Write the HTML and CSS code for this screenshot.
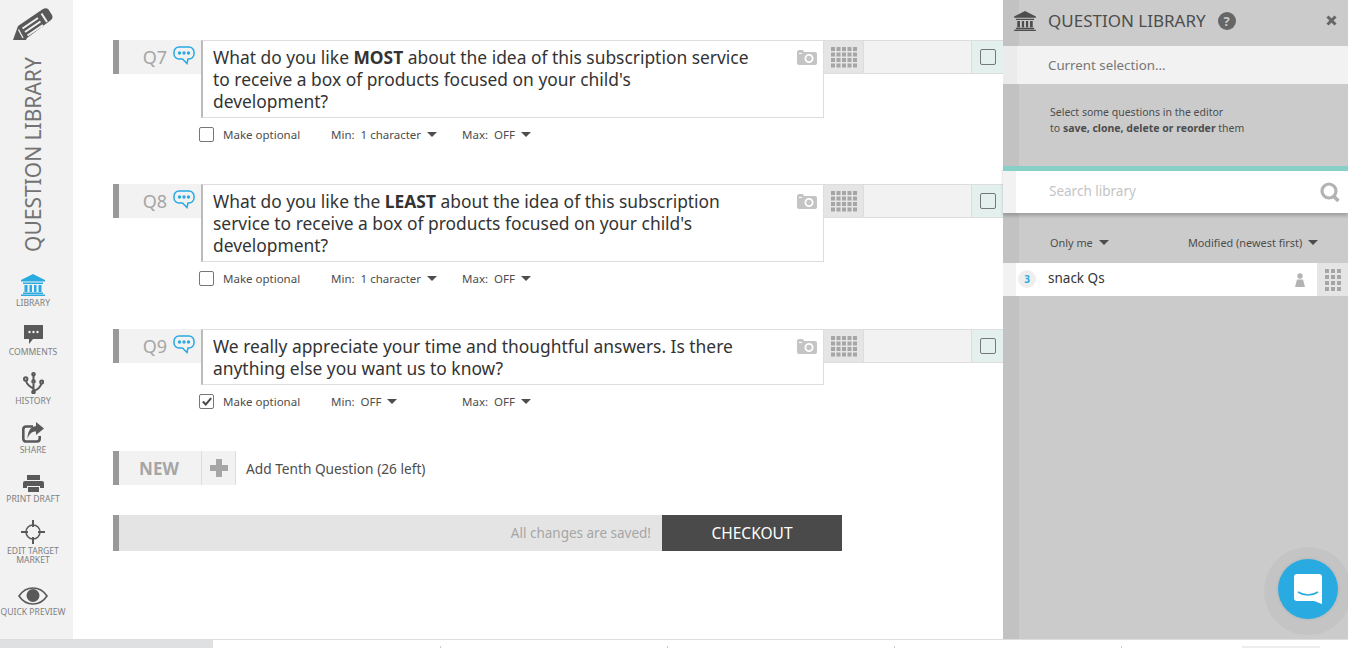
FILE: index.html
```html
<!DOCTYPE html>
<html lang="en">

<head>
    <meta charset="UTF-8" />
    <meta name="viewport" content="width=device-width, initial-scale=1.0" />
    <title>Question editor</title>
    <link rel="stylesheet" href="styles.css">
</head>

<body>
    <svg class="defs" width="0" height="0">
        <symbol id="bank" viewBox="0 0 24 22">
            <path d="M12 0 24 6v1.500H0V6zM2 8.500h20V10H2zM3.500 11h3v7h-3zM8.500 11h2.500v7H8.500zM13 11h2.500v7H13zM17.500 11h3v7h-3zM2 18.500h20V20H2zM0 20.500h24V22H0z" />
        </symbol>
        <symbol id="bubble" viewBox="0 0 22 19">
            <path d="M6 1h10a5 5 0 0 1 5 5v2a5 5 0 0 1-5 5h-1l-1 4.500-4.500-4.500H6a5 5 0 0 1-5-5V6a5 5 0 0 1 5-5z" fill="none" stroke="#29abe2" stroke-width="1.500" />
            <circle cx="6.500" cy="7" r="1.700" fill="#29abe2" />
            <circle cx="11" cy="7" r="1.700" fill="#29abe2" />
            <circle cx="15.500" cy="7" r="1.700" fill="#29abe2" />
        </symbol>
        <symbol id="camera" viewBox="0 0 20 15">
            <path fill-rule="evenodd" d="M2 0h4l1 2h11a2 2 0 0 1 2 2v9a2 2 0 0 1-2 2H2a2 2 0 0 1-2-2V2a2 2 0 0 1 2-2zM12 4a4.500 4.500 0 1 0 0 9 4.500 4.500 0 0 0 0-9zM12 5.800a2.700 2.700 0 1 1 0 5.400 2.700 2.700 0 0 1 0-5.400zM2 3v1h3V3z" />
        </symbol>
        <symbol id="grip" viewBox="0 0 26 21">
            <path d="M0 0h4v4H0zM5.500 0h4v4h-4zM11 0h4v4h-4zM16.500 0h4v4h-4zM22 0h4v4h-4zM0 5.500h4v4H0zM5.500 5.500h4v4h-4zM11 5.500h4v4h-4zM16.500 5.500h4v4h-4zM22 5.500h4v4h-4zM0 11h4v4H0zM5.500 11h4v4h-4zM11 11h4v4h-4zM16.500 11h4v4h-4zM22 11h4v4h-4zM0 16.500h4v4H0zM5.500 16.500h4v4h-4zM11 16.500h4v4h-4zM16.500 16.500h4v4h-4zM22 16.500h4v4h-4z" />
        </symbol>
    </svg>

    <div class="app">
        <aside class="sidebar">
            <svg class="pencil" viewBox="0 0 42 34">
                <path d="M1 33 6 19 31 2c2-1.200 4-1 5.500.5l3.500 5.500c1 2 .5 3.800-1 5L15 31l-1 2z" fill="#595959" />
                <path d="M10.500 21.500 26 11M13 25 28.500 14.500M15.500 28.500 31 18M29.500 6.500l5.500 8.500" fill="none" stroke="#f2f2f2" stroke-width="2" />
                <path d="M6.500 22.500 11 31" stroke="#f2f2f2" stroke-width="1.300" />
            </svg>
            <div class="sideTitle">QUESTION LIBRARY</div>
            <nav class="sideNav">
                <a class="sideLink active">
                    <svg class="sideIcon" width="24" height="22"><use href="#bank" /></svg>
                    <span>LIBRARY</span>
                </a>
                <a class="sideLink">
                    <svg class="sideIcon" viewBox="0 0 19 20" width="19" height="20">
                        <path d="M0 0h19v14H9l-4 5v-5H0z" />
                        <circle cx="5.500" cy="7" r="1.200" fill="#f2f2f2" />
                        <circle cx="9.500" cy="7" r="1.200" fill="#f2f2f2" />
                        <circle cx="13.500" cy="7" r="1.200" fill="#f2f2f2" />
                    </svg>
                    <span>COMMENTS</span>
                </a>
                <a class="sideLink">
                    <svg class="sideIcon" viewBox="0 0 21 22" width="21" height="22">
                        <g fill="none" stroke="#595959" stroke-width="2">
                            <path d="M10.500 3v5M10.500 11.500V19M3 9c1.500 4.500 4 6 7.500 7.500M18.500 11.500c-1 3.500-3.500 6-8 7.500" />
                            <circle cx="10.500" cy="2.300" r="1.300" />
                            <circle cx="10.500" cy="9.500" r="1.300" />
                            <circle cx="2.700" cy="7" r="1.700" />
                            <circle cx="18.700" cy="10" r="1.500" />
                            <circle cx="10.500" cy="20" r="1.300" />
                        </g>
                    </svg>
                    <span>HISTORY</span>
                </a>
                <a class="sideLink">
                    <svg class="sideIcon" viewBox="0 0 22 21" width="22" height="21">
                        <path d="M11 4.500H4a2.700 2.700 0 0 0-2.700 2.700v9.600A2.700 2.700 0 0 0 4 19.500h11a2.700 2.700 0 0 0 2.700-2.700V14" fill="none" stroke="#595959" stroke-width="2.600" />
                        <path d="M14 0 22 6.500 14 13V9.500C9.500 9.500 7 12 5.500 17 5.500 9.500 8.500 4.500 14 4z" />
                    </svg>
                    <span>SHARE</span>
                </a>
                <a class="sideLink">
                    <svg class="sideIcon" viewBox="0 0 21 17" width="21" height="17">
                        <path d="M4 0h13v5H4zM2 6h17a2 2 0 0 1 2 2v5h-4v-2H4v2H0V8a2 2 0 0 1 2-2zM5 12h11v5H5z" />
                    </svg>
                    <span>PRINT DRAFT</span>
                </a>
                <a class="sideLink tall">
                    <svg class="sideIcon" viewBox="0 0 24 24" width="24" height="24">
                        <circle cx="12" cy="12" r="7" fill="none" stroke="#595959" stroke-width="1.500" />
                        <path d="M11 0h2v7h-2zM11 17h2v7h-2zM0 11h7v2H0zM17 11h7v2h-7z" />
                    </svg>
                    <span>EDIT TARGET MARKET</span>
                </a>
                <a class="sideLink last">
                    <svg class="sideIcon" viewBox="0 0 30 18" width="30" height="18">
                        <path d="M1 9C5 3 10 1 15 1s10 2 14 8c-4 6-9 8-14 8S5 15 1 9z" fill="none" stroke="#595959" stroke-width="1.600" />
                        <circle cx="15" cy="8.500" r="6.500" />
                    </svg>
                    <span>QUICK PREVIEW</span>
                </a>
            </nav>
        </aside>

        <main class="editor">
            <section class="question">
                <div class="questionRow">
                    <div class="qLabel">
                        <span class="qNum">Q7</span>
                        <svg class="qBubble" width="22" height="19"><use href="#bubble" /></svg>
                    </div>
                    <div class="qText">
                        <p>What do you like <b>MOST</b> about the idea of this subscription service to receive a box of products focused on your child's development?</p>
                        <svg class="qCamera" width="20" height="15"><use href="#camera" /></svg>
                    </div>
                    <div class="qTools">
                        <div class="qGrip"><svg width="26" height="21"><use href="#grip" /></svg></div>
                        <div class="qBlank"></div>
                        <div class="qSelect"><span class="check"></span></div>
                    </div>
                </div>
                <div class="qOptions">
                    <label class="optional"><span class="check"></span>Make optional</label>
                    <span class="limit min">Min:&nbsp; 1 character <i class="caret"></i></span>
                    <span class="limit">Max:&nbsp; OFF <i class="caret"></i></span>
                </div>
            </section>

            <section class="question">
                <div class="questionRow">
                    <div class="qLabel">
                        <span class="qNum">Q8</span>
                        <svg class="qBubble" width="22" height="19"><use href="#bubble" /></svg>
                    </div>
                    <div class="qText">
                        <p>What do you like the <b>LEAST</b> about the idea of this subscription service to receive a box of products focused on your child's development?</p>
                        <svg class="qCamera" width="20" height="15"><use href="#camera" /></svg>
                    </div>
                    <div class="qTools">
                        <div class="qGrip"><svg width="26" height="21"><use href="#grip" /></svg></div>
                        <div class="qBlank"></div>
                        <div class="qSelect"><span class="check"></span></div>
                    </div>
                </div>
                <div class="qOptions">
                    <label class="optional"><span class="check"></span>Make optional</label>
                    <span class="limit min">Min:&nbsp; 1 character <i class="caret"></i></span>
                    <span class="limit">Max:&nbsp; OFF <i class="caret"></i></span>
                </div>
            </section>

            <section class="question">
                <div class="questionRow">
                    <div class="qLabel">
                        <span class="qNum">Q9</span>
                        <svg class="qBubble" width="22" height="19"><use href="#bubble" /></svg>
                    </div>
                    <div class="qText">
                        <p>We really appreciate your time and thoughtful answers. Is there anything else you want us to know?</p>
                        <svg class="qCamera" width="20" height="15"><use href="#camera" /></svg>
                    </div>
                    <div class="qTools">
                        <div class="qGrip"><svg width="26" height="21"><use href="#grip" /></svg></div>
                        <div class="qBlank"></div>
                        <div class="qSelect"><span class="check"></span></div>
                    </div>
                </div>
                <div class="qOptions">
                    <label class="optional">
                        <span class="check checked">
                            <svg viewBox="0 0 12 10" width="10" height="9"><path d="M1 5l3.500 3.500L11 1" fill="none" stroke="#4a4a4a" stroke-width="2.400" /></svg>
                        </span>Make optional
                    </label>
                    <span class="limit min">Min:&nbsp; OFF <i class="caret"></i></span>
                    <span class="limit">Max:&nbsp; OFF <i class="caret"></i></span>
                </div>
            </section>

            <div class="newRow">
                <div class="newLabel">NEW</div>
                <div class="newPlus">
                    <svg viewBox="0 0 18 18" width="18" height="18"><path d="M6 0h6v6h6v6h-6v6H6v-6H0V6h6z" /></svg>
                </div>
                <span class="newText">Add Tenth Question (26 left)</span>
            </div>

            <div class="saveBar">
                <span class="saveMsg">All changes are saved!</span>
                <button class="checkout">CHECKOUT</button>
            </div>
        </main>

        <aside class="library">
            <header class="libHead">
                <svg class="libBank" width="22" height="20"><use href="#bank" /></svg>
                <h2>QUESTION LIBRARY</h2>
                <span class="help">?</span>
                <svg class="close" viewBox="0 0 11 11" width="11" height="11"><path d="M1.500 1.500l8 8M9.500 1.500l-8 8" stroke="#666" stroke-width="3" /></svg>
            </header>
            <div class="libCurrent">Current selection...</div>
            <p class="libHint">Select some questions in the editor<br>to <b>save, clone, delete or reorder</b> them</p>
            <div class="libSearch">
                <span class="searchText">Search library</span>
                <svg class="searchIcon" viewBox="0 0 20 20" width="20" height="20">
                    <circle cx="9" cy="9" r="7" fill="none" stroke="#b3b3b3" stroke-width="3.200" />
                    <path d="M13.500 14l5 5" stroke="#b3b3b3" stroke-width="3.600" />
                </svg>
            </div>
            <div class="libFilters">
                <span>Only me <i class="caret"></i></span>
                <span>Modified (newest first) <i class="caret"></i></span>
            </div>
            <div class="libItem">
                <span class="count">3</span>
                <span class="itemName">snack Qs</span>
                <svg class="person" viewBox="0 0 10 14" width="10" height="14">
                    <circle cx="5" cy="3" r="2.700" />
                    <path d="M2 6.500h6l2 7.500H0z" />
                </svg>
                <div class="itemGrip">
                    <svg viewBox="0 0 16 22" width="16" height="22"><path d="M0 0h4v4H0zM6 0h4v4H6zM12 0h4v4h-4zM0 6h4v4H0zM6 6h4v4H6zM12 6h4v4h-4zM0 12h4v4H0zM6 12h4v4H6zM12 12h4v4h-4zM0 18h4v4H0zM6 18h4v4H6zM12 18h4v4h-4z" /></svg>
                </div>
            </div>
        </aside>
    </div>

    <footer class="timeline">
        <div class="timeStart"></div>
        <div class="timeTicks">
            <span></span><span></span><span></span><span></span>
            <div class="timeEnd"></div>
        </div>
    </footer>

    <button class="chat">
        <svg viewBox="0 0 28 30" width="28" height="30">
            <path d="M3 0h22a3 3 0 0 1 3 3v27l-8-3H3a3 3 0 0 1-3-3V3a3 3 0 0 1 3-3z" fill="#fff" />
            <path d="M4 18c6 4 14 4 20 0" fill="none" stroke="#29abe2" stroke-width="1.600" />
        </svg>
    </button>
</body>

</html>
```
FILE: styles.css
```css
* {
    box-sizing: border-box;
}

body {
    margin: 0;
    width: 1348px;
    height: 648px;
    overflow: hidden;
    position: relative;
    font-family: "Noto Sans", "Open Sans", sans-serif;
    color: #333;
    background: #fff;
}

.defs {
    position: absolute;
}

.app {
    display: flex;
    height: 639px;
}

/* left sidebar */

.sidebar {
    width: 73px;
    flex-shrink: 0;
    background: #f2f2f2;
    display: flex;
    flex-direction: column;
    align-items: center;
}

.pencil {
    width: 42px;
    height: 34px;
    margin: 7px 0 0 -8px;
    flex-shrink: 0;
}

.sideTitle {
    writing-mode: vertical-rl;
    transform: rotate(180deg);
    font-size: 21px;
    line-height: 24px;
    height: 196px;
    margin: 15px 0 0 -8px;
    color: #737373;
    text-align: left;
    white-space: nowrap;
}

.sideNav {
    display: flex;
    flex-direction: column;
    margin-top: 18px;
    width: 100%;
    padding-right: 7px;
}

.sideLink {
    height: 49px;
    display: flex;
    flex-direction: column;
    align-items: center;
    justify-content: flex-end;
    font-size: 8.600px;
    line-height: 9px;
    color: #808080;
    text-align: center;
    fill: #595959;
    white-space: nowrap;
}

.sideLink.tall {
    height: 61px;
}

.sideLink.tall span {
    width: 60px;
    white-space: normal;
}

.sideLink.last {
    height: 52px;
}

.sideLink.active {
    height: 38px;
    fill: #29abe2;
}

.sideIcon {
    margin-bottom: 3px;
}

/* editor */

.editor {
    flex: 1;
    padding: 40px 0 0 40px;
    min-width: 0;
}

.question {
    margin-bottom: 34px;
}

.question:nth-of-type(2) {
    margin-bottom: 35px;
}

.questionRow {
    display: flex;
    align-items: flex-start;
}

.qLabel {
    width: 88px;
    height: 34px;
    flex-shrink: 0;
    border-left: 6px solid #999;
    background: #f2f2f2;
    display: flex;
    align-items: center;
    justify-content: flex-end;
    padding-right: 6px;
}

.qNum {
    font-size: 18px;
    color: #a6a6a6;
    margin-right: 6px;
}

.qBubble {
    margin-top: -3px;
}

.qText {
    width: 623px;
    flex-shrink: 0;
    position: relative;
    border-left: 2px solid #bbb;
    border-top: 1px solid #ddd;
    border-right: 1px solid #ddd;
    border-bottom: 1px solid #ddd;
    padding: 5px 73px 5px 10px;
}

.qText p {
    margin: 0;
    font-size: 17.400px;
    line-height: 22px;
    color: #333;
}

.qCamera {
    position: absolute;
    top: 9px;
    right: 6px;
    fill: #c4c4c4;
}

.qTools {
    flex: 1;
    height: 34px;
    display: flex;
    border-top: 1px solid #ddd;
    border-bottom: 1px solid #ddd;
}

.qGrip {
    width: 40px;
    background: #e5e5e5;
    border-right: 1px solid #ddd;
    display: flex;
    align-items: center;
    justify-content: center;
    fill: #a6a6a6;
}

.qBlank {
    flex: 1;
    background: #f2f2f2;
}

.qSelect {
    width: 32px;
    background: #e3f0ed;
    border-left: 1px solid #ddd;
    display: flex;
    align-items: center;
    justify-content: center;
}

.check {
    width: 15px;
    height: 15px;
    border: 1.500px solid #777;
    border-radius: 2px;
    background: #fff;
    display: inline-flex;
    align-items: center;
    justify-content: center;
    flex-shrink: 0;
}

.qSelect .check {
    width: 16px;
    height: 16px;
    background: transparent;
}

.qOptions {
    display: flex;
    align-items: center;
    height: 32px;
    margin-left: 86px;
    font-size: 11.500px;
    color: #4d4d4d;
}

.optional {
    display: flex;
    align-items: center;
    gap: 9px;
    width: 132px;
}

.limit {
    white-space: nowrap;
}

.limit.min {
    width: 131px;
}

.caret {
    display: inline-block;
    width: 0;
    height: 0;
    margin-left: 3px;
    vertical-align: 2px;
    border-left: 5px solid transparent;
    border-right: 5px solid transparent;
    border-top: 5px solid #4d4d4d;
}

.newRow {
    display: flex;
    align-items: center;
    height: 34px;
    margin-top: 33px;
}

.newLabel {
    width: 88px;
    height: 100%;
    border-left: 6px solid #999;
    background: #f2f2f2;
    display: flex;
    align-items: center;
    justify-content: center;
    font-size: 17px;
    font-weight: 700;
    color: #a6a6a6;
    padding-right: 2px;
}

.newPlus {
    width: 35px;
    height: 100%;
    border-left: 1px solid #ddd;
    border-right: 1px solid #ddd;
    background: #f2f2f2;
    display: flex;
    align-items: center;
    justify-content: center;
    fill: #a6a6a6;
}

.newText {
    margin-left: 10px;
    font-size: 13.700px;
    color: #4d4d4d;
}

.saveBar {
    display: flex;
    align-items: center;
    justify-content: flex-end;
    width: 729px;
    height: 36px;
    margin-top: 30px;
    border-left: 6px solid #999;
    background: #e4e4e4;
}

.saveMsg {
    font-size: 13.500px;
    color: #a6a6a6;
    margin-right: 11px;
}

.checkout {
    width: 180px;
    height: 36px;
    border: 0;
    background: #4a4a4a;
    color: #fff;
    font-family: inherit;
    font-size: 15.500px;
}

/* question library panel */

.library {
    width: 345px;
    flex-shrink: 0;
    background: linear-gradient(to right, #c2c2c2 16px, #cbcbcb 16px);
    display: flex;
    flex-direction: column;
}

.libHead {
    height: 46px;
    display: flex;
    align-items: center;
    padding: 0 0 5px 11px;
    color: #4d4d4d;
    fill: #4d4d4d;
}

.libBank {
    flex-shrink: 0;
}

.libHead h2 {
    margin: 0 0 0 12px;
    font-size: 17px;
    font-weight: 400;
}

.help {
    width: 18px;
    height: 18px;
    margin-left: 12px;
    border-radius: 50%;
    background: #666;
    color: #cbcbcb;
    font-size: 13px;
    font-weight: 700;
    line-height: 18px;
    text-align: center;
}

.close {
    margin-left: auto;
    margin-right: 11px;
}

.libCurrent {
    height: 38px;
    line-height: 38px;
    padding-left: 45px;
    background: linear-gradient(to right, #ebebeb 14px, #f2f2f2 14px);
    font-size: 13.300px;
    color: #777;
}

.libHint {
    height: 82px;
    margin: 0;
    padding: 20px 0 0 47px;
    font-size: 10.500px;
    line-height: 16px;
    color: #4d4d4d;
}

.libSearch {
    height: 47px;
    display: flex;
    align-items: center;
    justify-content: space-between;
    padding: 0 8px 0 46px;
    border-top: 5px solid #86d0c8;
    background: linear-gradient(to right, #f2f2f2 13px, #fff 13px);
    box-shadow: 0 3px 3px rgba(0, 0, 0, 0.2);
}

.searchText {
    font-size: 13.500px;
    color: #c4c4c4;
    margin-top: -2px;
}

.libFilters {
    height: 50px;
    display: flex;
    align-items: center;
    justify-content: space-between;
    padding: 9px 30px 0 47px;
    font-size: 10.900px;
    color: #4d4d4d;
}

.libFilters .caret {
    margin-left: 3px;
}

.libItem {
    height: 33px;
    display: flex;
    align-items: center;
    background: linear-gradient(to right, #f2f2f2 13px, #fff 13px);
}

.count {
    width: 18px;
    height: 18px;
    margin: -1px 0 0 15px;
    border-radius: 50%;
    background: #eee;
    color: #29abe2;
    font-size: 10px;
    font-weight: 700;
    line-height: 18px;
    text-align: center;
}

.itemName {
    margin: -3px 0 0 12px;
    font-size: 13.500px;
    color: #333;
}

.person {
    margin-left: auto;
    margin-right: 12px;
    fill: #b3b3b3;
}

.itemGrip {
    width: 31px;
    height: 100%;
    background: #e5e5e5;
    display: flex;
    align-items: center;
    justify-content: center;
    fill: #a6a6a6;
}

/* bottom strip */

.timeline {
    height: 9px;
    display: flex;
    border-top: 1px solid #ddd;
}

.timeStart {
    width: 213px;
    background: #dfe0e1;
}

.timeTicks {
    flex: 1;
    position: relative;
    display: flex;
    align-items: flex-end;
    padding-left: 214px;
    gap: 213px;
}

.timeTicks span {
    width: 1px;
    height: 2px;
    background: #ccc;
    flex-shrink: 0;
    margin-left: 13px;
}

.timeEnd {
    position: absolute;
    right: 28px;
    bottom: 0;
    width: 78px;
    height: 2px;
    background: #eee;
}

/* chat launcher */

.chat {
    position: absolute;
    left: 1278px;
    top: 559px;
    width: 60px;
    height: 60px;
    padding: 0;
    border: 0;
    border-radius: 50%;
    background: #29abe2;
    box-shadow: 0 0 0 2px #bfbfbf, 0 2px 0 14px #c4c4c4;
    display: flex;
    align-items: center;
    justify-content: center;
}
```
